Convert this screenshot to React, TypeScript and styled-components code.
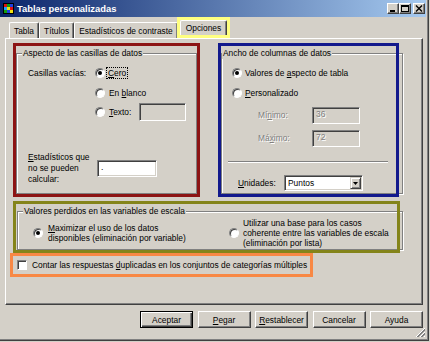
import React from 'react';
import styled, { createGlobalStyle, css } from 'styled-components';

const FACE = '#d4d0c8';

const GlobalStyle = createGlobalStyle`
  html, body { margin: 0; padding: 0; background: ${FACE}; }
  body { font-family: "Liberation Sans", Arial, sans-serif; font-size: 8.4px; color: #000; }
  * { box-sizing: border-box; }
`;

const Window = styled.div`
  position: relative;
  width: 429px;
  height: 341px;
  background: ${FACE};
  border-right: 1px solid #404040;
  border-bottom: 1px solid #404040;
  box-shadow: inset -1px -1px 0 #808080;
  padding: 0 2px 2px 0;
  display: flex;
  flex-direction: column;
`;

const TitleBar = styled.div`
  height: 17px;
  flex: none;
  display: flex;
  align-items: center;
  padding: 0 1px 0 3px;
  background: linear-gradient(to right, #0a246a, #a6caf0);
`;

const Title = styled.span`
  flex: 1;
  margin-left: 3px;
  color: #fff;
  font-weight: bold;
  font-size: 9.4px;
  white-space: nowrap;
`;

const CaptionGroup = styled.div`
  display: flex;
  align-items: center;
`;

const CaptionButton = styled.div<{ $gap?: number }>`
  width: 12px;
  height: 11px;
  margin-left: ${p => p.$gap ?? 0}px;
  background: ${FACE};
  border: 1px solid;
  border-color: #fff #404040 #404040 #fff;
  box-shadow: inset -1px -1px 0 #808080;
  display: flex;
  align-items: center;
  justify-content: center;
`;

const Body = styled.div`
  flex: 1;
  display: flex;
  flex-direction: column;
  padding-left: 5px;
`;

const TabStrip = styled.div`
  height: 21px;
  flex: none;
  display: flex;
  align-items: flex-end;
  padding-left: 4px;
`;

const Tab = styled.div<{ $active?: boolean }>`
  height: ${p => (p.$active ? 15 : 16)}px;
  padding: 0 ${p => (p.$active ? 5 : 4)}px;
  display: flex;
  align-items: center;
  white-space: nowrap;
  border: 1px solid;
  border-bottom: none;
  border-color: #fff #404040 transparent #fff;
  box-shadow: inset -1px 0 0 #808080;
  border-radius: 2px 2px 0 0;
  padding-bottom: ${p => (p.$active ? 1 : 0)}px;
`;

const TabHighlight = styled.div`
  display: flex;
  border: 3px solid #ffff80;
  margin-left: -1px;
  position: relative;
  z-index: 2;
`;

const Panel = styled.div`
  height: 267px;
  flex: none;
  margin-right: 3px;
  border: 1px solid;
  border-color: #fff #404040 #404040 #fff;
  box-shadow: inset -1px -1px 0 #808080;
  padding: 4px 0 0 7px;
  display: flex;
  flex-direction: column;
`;

const TopRow = styled.div`
  display: flex;
  gap: 18px;
`;

const Annot = styled.div<{ $color: string; $w: number; $h: number; $mt?: number; $ml?: number }>`
  position: relative;
  width: ${p => p.$w}px;
  height: ${p => p.$h}px;
  margin-top: ${p => p.$mt ?? 0}px;
  margin-left: ${p => p.$ml ?? 0}px;
  padding: 3px;
  display: flex;
  flex-direction: column;
  flex: none;
  &::after {
    content: '';
    position: absolute;
    inset: 0;
    border: 3px solid ${p => p.$color};
    pointer-events: none;
    z-index: 3;
  }
`;

const GroupBox = styled.div<{ $ml?: number; $mr?: number; $pt?: number; $pl?: number; $row?: boolean }>`
  position: relative;
  flex: 1;
  margin: 7px ${p => p.$mr ?? 0}px 0 ${p => p.$ml ?? 0}px;
  border: 1px solid #808080;
  box-shadow: inset 1px 1px 0 #fff, 1px 1px 0 #fff;
  padding: ${p => p.$pt ?? 0}px 0 0 ${p => p.$pl ?? 0}px;
  display: flex;
  flex-direction: ${p => (p.$row ? 'row' : 'column')};
`;

const Legend = styled.span<{ $left: number }>`
  position: absolute;
  top: -6px;
  left: ${p => p.$left}px;
  padding: 0 1px;
  background: ${FACE};
  line-height: 11px;
  white-space: nowrap;
`;

const Row = styled.div<{ $h: number; $indent?: number; $mt?: number }>`
  display: flex;
  align-items: center;
  height: ${p => p.$h}px;
  padding-left: ${p => p.$indent ?? 0}px;
  margin-top: ${p => p.$mt ?? 0}px;
  flex: none;
  white-space: nowrap;
`;

const FieldLabel = styled.span<{ $w: number; $disabled?: boolean }>`
  width: ${p => p.$w}px;
  flex: none;
  line-height: 11px;
  ${p =>
    p.$disabled &&
    css`
      color: #808080;
      text-shadow: 1px 1px 0 #fff;
    `}
`;

const Option = styled.span<{ $gap?: number }>`
  display: flex;
  align-items: center;
  gap: ${p => p.$gap ?? 4}px;
  white-space: nowrap;
`;

const Radio = styled.span<{ $checked?: boolean }>`
  position: relative;
  width: 10px;
  height: 10px;
  flex: none;
  border-radius: 50%;
  border: 1px solid;
  border-color: #808080 #fff #fff #808080;
  background: #fff;
  box-shadow: inset 1px 1px 0 #404040;
  &::after {
    content: '';
    display: ${p => (p.$checked ? 'block' : 'none')};
    position: absolute;
    left: 2px;
    top: 2px;
    width: 4px;
    height: 4px;
    border-radius: 50%;
    background: #000;
  }
`;

const Check = styled.span`
  width: 10px;
  height: 10px;
  flex: none;
  border: 1px solid;
  border-color: #808080 #fff #fff #808080;
  background: #fff;
  box-shadow: inset 1px 1px 0 #404040;
`;

const Focus = styled.span`
  outline: 1px dotted #000;
  outline-offset: 0px;
  padding: 0 1px;
  margin-left: -2px;
`;

const Mn = styled.u`
  text-decoration: underline;
  text-underline-offset: 1px;
`;

const Field = styled.div<{ $w: number; $h: number; $bg?: string; $ml?: number; $disabled?: boolean }>`
  width: ${p => p.$w}px;
  height: ${p => p.$h}px;
  margin-left: ${p => p.$ml ?? 0}px;
  flex: none;
  background: ${p => p.$bg ?? '#fff'};
  border: 1px solid;
  border-color: #808080 #fff #fff #808080;
  box-shadow: inset 1px 1px 0 #404040, inset -1px -1px 0 ${FACE};
  padding: 1px 3px;
  line-height: 11px;
  ${p =>
    p.$disabled &&
    css`
      color: #808080;
      text-shadow: 1px 1px 0 #fff;
    `}
`;

const Select = styled.div`
  width: 79px;
  height: 16px;
  flex: none;
  display: flex;
  align-items: center;
  background: #fff;
  border: 1px solid;
  border-color: #808080 #fff #fff #808080;
  box-shadow: inset 1px 1px 0 #404040, inset -1px -1px 0 ${FACE};
  padding: 1px 1px 1px 3px;
`;

const SelectValue = styled.span`
  flex: 1;
`;

const DropButton = styled.span`
  width: 11px;
  height: 12px;
  background: ${FACE};
  border: 1px solid;
  border-color: ${FACE} #404040 #404040 ${FACE};
  box-shadow: inset 1px 1px 0 #fff, inset -1px -1px 0 #808080;
  display: flex;
  align-items: center;
  justify-content: center;
`;

const Separator = styled.div`
  height: 2px;
  margin: 13px 14px 0 -4px;
  border-top: 1px solid #808080;
  border-bottom: 1px solid #fff;
  flex: none;
`;

const OptionColumn = styled.div<{ $w?: number; $pl: number }>`
  ${p => (p.$w ? `width: ${p.$w}px; flex: none;` : 'flex: 1;')}
  padding-left: ${p => p.$pl}px;
  display: flex;
  align-items: center;
`;

const MultiLine = styled.span`
  line-height: 10px;
  white-space: nowrap;
`;

const CheckRow = styled.div`
  flex: 1;
  display: flex;
  align-items: center;
  gap: 5px;
  padding-left: 4px;
  white-space: nowrap;
`;

const ButtonRow = styled.div`
  display: flex;
  justify-content: flex-end;
  gap: 4.5px;
  margin-top: 6px;
  padding-right: 3px;
`;

const Button = styled.button<{ $default?: boolean }>`
  width: 53px;
  height: 17px;
  padding: 0;
  font: inherit;
  color: #000;
  background: ${FACE};
  border: 1px solid;
  border-color: #fff #404040 #404040 #fff;
  box-shadow: inset -1px -1px 0 #808080;
  ${p =>
    p.$default &&
    css`
      border-color: #000;
      box-shadow: inset 1px 1px 0 #fff, inset -1px -1px 0 #404040, inset -2px -2px 0 #808080;
    `}
`;

const Grip = styled.svg`
  position: absolute;
  right: 2px;
  bottom: 2px;
`;

const AppIcon = () => (
  <svg width="11" height="11" viewBox="0 0 11 11">
    <rect x="0" y="0" width="11" height="11" fill="#000" />
    <rect x="1" y="1" width="3" height="3" fill="#e01010" />
    <rect x="4" y="1" width="3" height="3" fill="#10a010" />
    <rect x="7" y="1" width="3" height="3" fill="#2040e0" />
    <rect x="1" y="4" width="3" height="3" fill="#20a0ff" />
    <rect x="4" y="4" width="3" height="3" fill="#f0e010" />
    <rect x="7" y="4" width="3" height="3" fill="#e01010" />
    <rect x="1" y="7" width="3" height="3" fill="#10a010" />
    <rect x="4" y="7" width="3" height="3" fill="#2040e0" />
    <rect x="7" y="7" width="3" height="3" fill="#f0e010" />
  </svg>
);

export default function App() {
  return (
    <>
      <GlobalStyle />
      <Window>
        <TitleBar>
          <AppIcon />
          <Title>Tablas personalizadas</Title>
          <CaptionGroup>
            <CaptionButton>
              <svg width="8" height="7" viewBox="0 0 8 7">
                <rect x="1" y="5" width="5" height="2" fill="#000" />
              </svg>
            </CaptionButton>
            <CaptionButton>
              <svg width="8" height="7" viewBox="0 0 8 7">
                <rect x="0.5" y="0.5" width="7" height="6" fill="none" stroke="#000" />
                <rect x="0" y="0" width="8" height="2" fill="#000" />
              </svg>
            </CaptionButton>
            <CaptionButton $gap={2}>
              <svg width="8" height="7" viewBox="0 0 8 7">
                <path d="M1 0.5 L7 6.5 M7 0.5 L1 6.5" stroke="#000" strokeWidth="1.4" />
              </svg>
            </CaptionButton>
          </CaptionGroup>
        </TitleBar>

        <Body>
          <TabStrip>
            <Tab>Tabla</Tab>
            <Tab>Títulos</Tab>
            <Tab>Estadísticos de contraste</Tab>
            <TabHighlight>
              <Tab $active>Opciones</Tab>
            </TabHighlight>
          </TabStrip>

          <Panel>
            <TopRow>
              <Annot $color="#8c1414" $w={187} $h={154}>
                <GroupBox $pt={9.5} $pl={11}>
                  <Legend $left={5}>Aspecto de las casillas de datos</Legend>
                  <Row $h={19.5}>
                    <FieldLabel $w={67}>Casillas vacías:</FieldLabel>
                    <Option>
                      <Radio $checked />
                      <Focus>
                        <Mn>C</Mn>ero
                      </Focus>
                    </Option>
                  </Row>
                  <Row $h={19.5} $indent={67}>
                    <Option>
                      <Radio />
                      <span>
                        En <Mn>b</Mn>lanco
                      </span>
                    </Option>
                  </Row>
                  <Row $h={19.5} $indent={67}>
                    <Option>
                      <Radio />
                      <span>
                        <Mn>T</Mn>exto:
                      </span>
                    </Option>
                    <Field $w={47} $h={18} $bg={FACE} $ml={8} />
                  </Row>
                  <Row $h={34} $mt={29}>
                    <FieldLabel $w={69}>
                      <Mn>E</Mn>stadísticos que
                      <br />
                      no se pueden
                      <br />
                      calcular:
                    </FieldLabel>
                    <Field $w={60} $h={17}>.</Field>
                  </Row>
                </GroupBox>
              </Annot>

              <Annot $color="#12198c" $w={181} $h={154}>
                <GroupBox $mr={-7} $pt={9.5} $pl={10}>
                  <Legend $left={0}>Ancho de columnas de datos</Legend>
                  <Row $h={19.5}>
                    <Option $gap={3}>
                      <Radio $checked />
                      <span>
                        Valores de <Mn>a</Mn>specto de tabla
                      </span>
                    </Option>
                  </Row>
                  <Row $h={19.5}>
                    <Option $gap={3}>
                      <Radio />
                      <span>
                        <Mn>P</Mn>ersonalizado
                      </span>
                    </Option>
                  </Row>
                  <Row $h={19} $mt={3.5} $indent={26}>
                    <FieldLabel $w={54} $disabled>
                      Mí<Mn>n</Mn>imo:
                    </FieldLabel>
                    <Field $w={48} $h={17} $bg={FACE} $disabled>
                      36
                    </Field>
                  </Row>
                  <Row $h={19} $mt={4} $indent={26}>
                    <FieldLabel $w={54} $disabled>
                      Má<Mn>x</Mn>imo:
                    </FieldLabel>
                    <Field $w={48} $h={17} $bg={FACE} $disabled>
                      72
                    </Field>
                  </Row>
                  <Separator />
                  <Row $h={16} $mt={12} $indent={6}>
                    <FieldLabel $w={46}>
                      <Mn>U</Mn>nidades:
                    </FieldLabel>
                    <Select>
                      <SelectValue>Puntos</SelectValue>
                      <DropButton>
                        <svg width="5" height="3" viewBox="0 0 5 3">
                          <path d="M0 0 H5 L2.5 3 Z" fill="#000" />
                        </svg>
                      </DropButton>
                    </Select>
                  </Row>
                </GroupBox>
              </Annot>
            </TopRow>

            <Annot $color="#84841a" $w={387} $h={52} $mt={4}>
              <GroupBox $ml={1} $mr={-6} $pt={4} $row>
                <Legend $left={5}>Valores perdidos en las variables de escala</Legend>
                <OptionColumn $w={211} $pl={15}>
                  <Option $gap={5}>
                    <Radio $checked />
                    <MultiLine>
                      <Mn>M</Mn>aximizar el uso de los datos
                      <br />
                      disponibles (eliminación por variable)
                    </MultiLine>
                  </Option>
                </OptionColumn>
                <OptionColumn $pl={0}>
                  <Option $gap={4}>
                    <Radio />
                    <MultiLine>
                      Utilizar una base para los casos
                      <br />
                      coherente entre las variables de escala
                      <br />
                      (eliminación por lista)
                    </MultiLine>
                  </Option>
                </OptionColumn>
              </GroupBox>
            </Annot>

            <Annot $color="#f88844" $w={303} $h={24} $ml={-3}>
              <CheckRow>
                <Check />
                <span>
                  Contar las respuestas <Mn>d</Mn>uplicadas en los conjuntos de categorías múltiples
                </span>
              </CheckRow>
            </Annot>
          </Panel>

          <ButtonRow>
            <Button $default>Aceptar</Button>
            <Button>
              <Mn>P</Mn>egar
            </Button>
            <Button>
              <Mn>R</Mn>establecer
            </Button>
            <Button>Cancelar</Button>
            <Button>Ayuda</Button>
          </ButtonRow>
        </Body>

        <Grip width="11" height="11" viewBox="0 0 11 11">
          <path d="M10 2 L2 10 M10 6 L6 10" stroke="#808080" strokeWidth="1" />
          <path d="M10 3 L3 10 M10 7 L7 10" stroke="#808080" strokeWidth="1" />
          <path d="M10 1 L1 10 M10 5 L5 10 M10 9 L9 10" stroke="#fff" strokeWidth="1" />
        </Grip>
      </Window>
    </>
  );
}
